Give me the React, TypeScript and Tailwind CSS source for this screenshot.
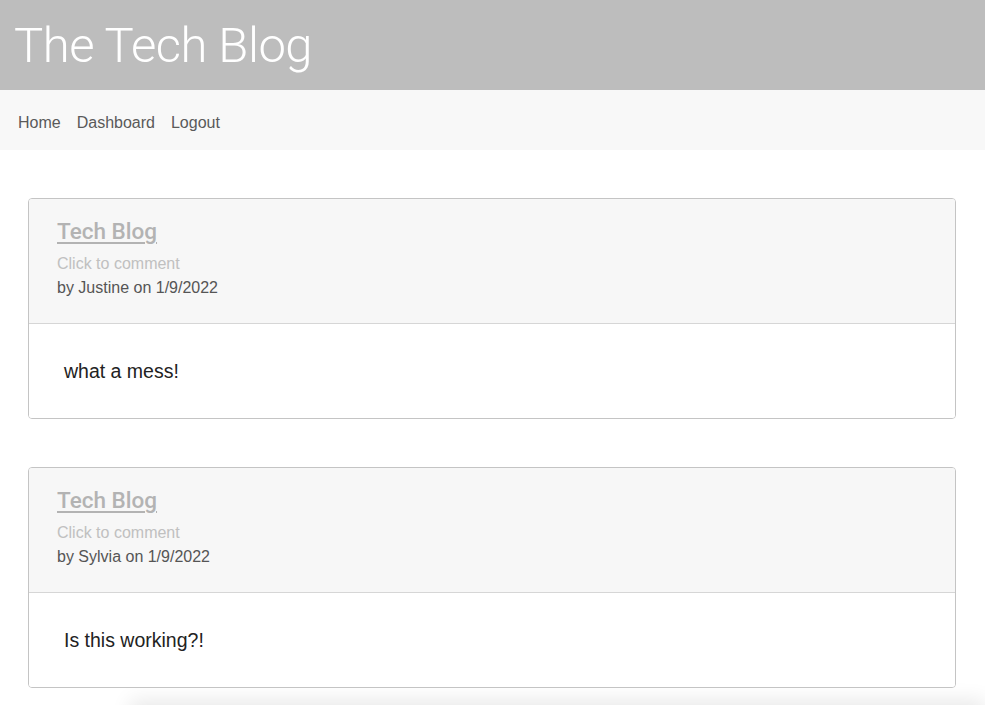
const posts = [
  { author: 'Justine', date: '1/9/2022', body: 'what a mess!' },
  { author: 'Sylvia', date: '1/9/2022', body: 'Is this working?!' },
]

function PostCard({ author, date, body }: { author: string; date: string; body: string }) {
  return (
    <div className="border border-[#c4c4c4] rounded-[4px] overflow-hidden">
      <div className="bg-[#f7f7f7] pl-[28px] pt-[16px] pb-[23px] border-b border-[#d6d6d6]">
        <a href="#" className="block w-fit text-[22.5px] leading-[33px] font-medium text-[#b3b3b3] underline underline-offset-[3px] decoration-[1.5px] font-['Roboto',sans-serif]">
          Tech Blog
        </a>
        <p className="mt-[4px] text-[16px] leading-[24px] text-[#c0c0c0]">Click to comment</p>
        <p className="text-[16px] leading-[24px] text-[#555]">
          by {author} on {date}
        </p>
      </div>
      <div className="bg-white pl-[35px] pt-[34px] pb-[33px]">
        <p className="text-[19.5px] leading-[27px] text-[#222]">{body}</p>
      </div>
    </div>
  )
}

export default function App() {
  return (
    <div className="min-h-screen bg-white font-['Liberation_Sans',Arial,sans-serif] overflow-hidden">
      {/* site header */}
      <header className="h-[90px] bg-[#bdbdbd] flex items-center px-[14px]">
        <h1 className="text-[49px] font-light text-white tracking-[-0.5px] font-['Roboto',sans-serif] leading-none pt-[1px]">
          The Tech Blog
        </h1>
      </header>
      <nav className="h-[60px] bg-[#f8f8f8] flex items-center gap-[16px] px-[18px] pt-[5px] text-[16px] text-[#5a5a5a]">
        <a href="#">Home</a>
        <a href="#">Dashboard</a>
        <a href="#">Logout</a>
      </nav>

      <main className="pt-[48px] pl-[28px] pr-[29px] flex flex-col gap-[48px]">
        {posts.map((p, i) => (
          <PostCard key={i} {...p} />
        ))}
      </main>

      <footer className="mt-[20px] ml-[130px] h-[40px] bg-white shadow-[0_-8px_20px_rgba(0,0,0,0.09)]" />
    </div>
  )
}
